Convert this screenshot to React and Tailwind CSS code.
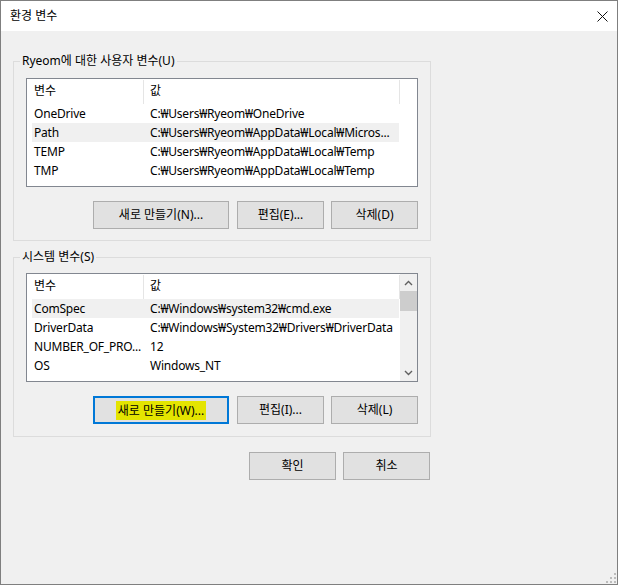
import React from "react";

const userVars = [
  ["OneDrive", "C:₩Users₩Ryeom₩OneDrive", false],
  ["Path", "C:₩Users₩Ryeom₩AppData₩Local₩Micros...", true],
  ["TEMP", "C:₩Users₩Ryeom₩AppData₩Local₩Temp", false],
  ["TMP", "C:₩Users₩Ryeom₩AppData₩Local₩Temp", false],
];

const sysVars = [
  ["ComSpec", "C:₩Windows₩system32₩cmd.exe", true],
  ["DriverData", "C:₩Windows₩System32₩Drivers₩DriverData", false],
  ["NUMBER_OF_PRO...", "12", false],
  ["OS", "Windows_NT", false],
];

const Header = () => (
  <div className="flex h-[25px] pt-[1px] ml-[5px]">
    <div className="w-[112px] pl-[2px] border-r border-[#e5e5e5] leading-[22px]">변수</div>
    <div className="w-[256px] pl-[6px] border-r border-[#e5e5e5] leading-[22px]">값</div>
  </div>
);

const Rows = ({ rows }) => (
  <div className="tracking-[-0.2px]">
    {rows.map(([name, value, selected]) => (
      <div
        key={name}
        className={
          "flex h-[19px] leading-[19px] w-[367px] ml-[5px] whitespace-nowrap " +
          (selected ? "bg-[#f0f0f0]" : "")
        }
      >
        <div className="w-[112px] pl-[2px] overflow-hidden">{name}</div>
        <div className="flex-1 pl-[6px] overflow-hidden">{value}</div>
      </div>
    ))}
  </div>
);

const Button = ({ children, w = "w-[87px]", focused }) => (
  <button
    className={
      "h-[28px] bg-[#e1e1e1] flex items-center justify-center text-[12px] text-black " +
      w +
      (focused ? " border-2 border-[#0078d7]" : " border border-[#adadad]")
    }
  >
    {children}
  </button>
);

const Chevron = ({ up }) => (
  <svg width="9" height="6" viewBox="0 0 9 6">
    <polyline
      points={up ? "1,5 4.5,1.5 8,5" : "1,1 4.5,4.5 8,1"}
      fill="none"
      stroke="#606060"
      strokeWidth="1.4"
    />
  </svg>
);

export default function App() {
  return (
    <div className="w-[618px] h-[585px] bg-[#f0f0f0] border border-[#7f7f7f] text-[12px] text-black font-['Noto_Sans','Noto_Sans_CJK_KR',sans-serif] relative">
      {/* title bar */}
      <div className="h-[30px] bg-white flex items-center justify-between pl-[9px] pr-[9px]">
        <span className="leading-[30px]">환경 변수</span>
        <svg width="11" height="11" viewBox="0 0 11 11">
          <path d="M0.5 0.5 L10.5 10.5 M10.5 0.5 L0.5 10.5" stroke="#111" strokeWidth="1" />
        </svg>
      </div>

      <div className="pl-[12px]">
        {/* user variables */}
        <fieldset className="mt-[22px] w-[417px] border border-[#dcdcdc]">
          <legend className="ml-[6px] px-[2px] leading-[16px]">Ryeom에 대한 사용자 변수(U)</legend>
          <div className="pt-[9px] px-[12px] pb-[11px]">
            <div className="w-[392px] h-[109px] border border-[#828790] bg-white">
              <Header />
              <Rows rows={userVars} />
            </div>
            <div className="flex justify-end mt-[14px]">
              <Button w="w-[136px]">새로 만들기(N)...</Button>
              <div className="w-[8px]" />
              <Button>편집(E)...</Button>
              <div className="w-[7px]" />
              <Button>삭제(D)</Button>
            </div>
          </div>
        </fieldset>

        {/* system variables */}
        <fieldset className="mt-[8px] w-[417px] border border-[#dcdcdc]">
          <legend className="ml-[6px] px-[2px] leading-[16px]">시스템 변수(S)</legend>
          <div className="pt-[8px] px-[12px] pb-[12px]">
            <div className="w-[392px] h-[109px] border border-[#828790] bg-white flex">
              <div className="flex-1 overflow-hidden">
                <Header />
                <Rows rows={sysVars} />
              </div>
              <div className="w-[17px] bg-[#f0f0f0] flex flex-col">
                <div className="h-[17px] flex items-center justify-center">
                  <Chevron up />
                </div>
                <div className="h-[20px] bg-[#cdcdcd]" />
                <div className="flex-1" />
                <div className="h-[17px] flex items-center justify-center">
                  <Chevron />
                </div>
              </div>
            </div>
            <div className="flex justify-end mt-[14px]">
              <Button w="w-[136px]" focused>
                <span className="bg-[#e4e400] px-[2px] leading-[19px]">새로 만들기(W)...</span>
              </Button>
              <div className="w-[8px]" />
              <Button>편집(I)...</Button>
              <div className="w-[7px]" />
              <Button>삭제(L)</Button>
            </div>
          </div>
        </fieldset>

        {/* OK / Cancel */}
        <div className="w-[417px] flex justify-end mt-[15px]">
          <Button>확인</Button>
          <div className="w-[7px]" />
          <Button>취소</Button>
        </div>
      </div>

      {/* resize grip */}
      <svg className="absolute right-[1px] bottom-[1px]" width="10" height="10" viewBox="0 0 10 10">
        <rect x="8" y="0" width="2" height="2" fill="#bcbcbc" />
        <rect x="4" y="4" width="2" height="2" fill="#bcbcbc" />
        <rect x="8" y="4" width="2" height="2" fill="#bcbcbc" />
        <rect x="0" y="8" width="2" height="2" fill="#bcbcbc" />
        <rect x="4" y="8" width="2" height="2" fill="#bcbcbc" />
        <rect x="8" y="8" width="2" height="2" fill="#bcbcbc" />
      </svg>
    </div>
  );
}
